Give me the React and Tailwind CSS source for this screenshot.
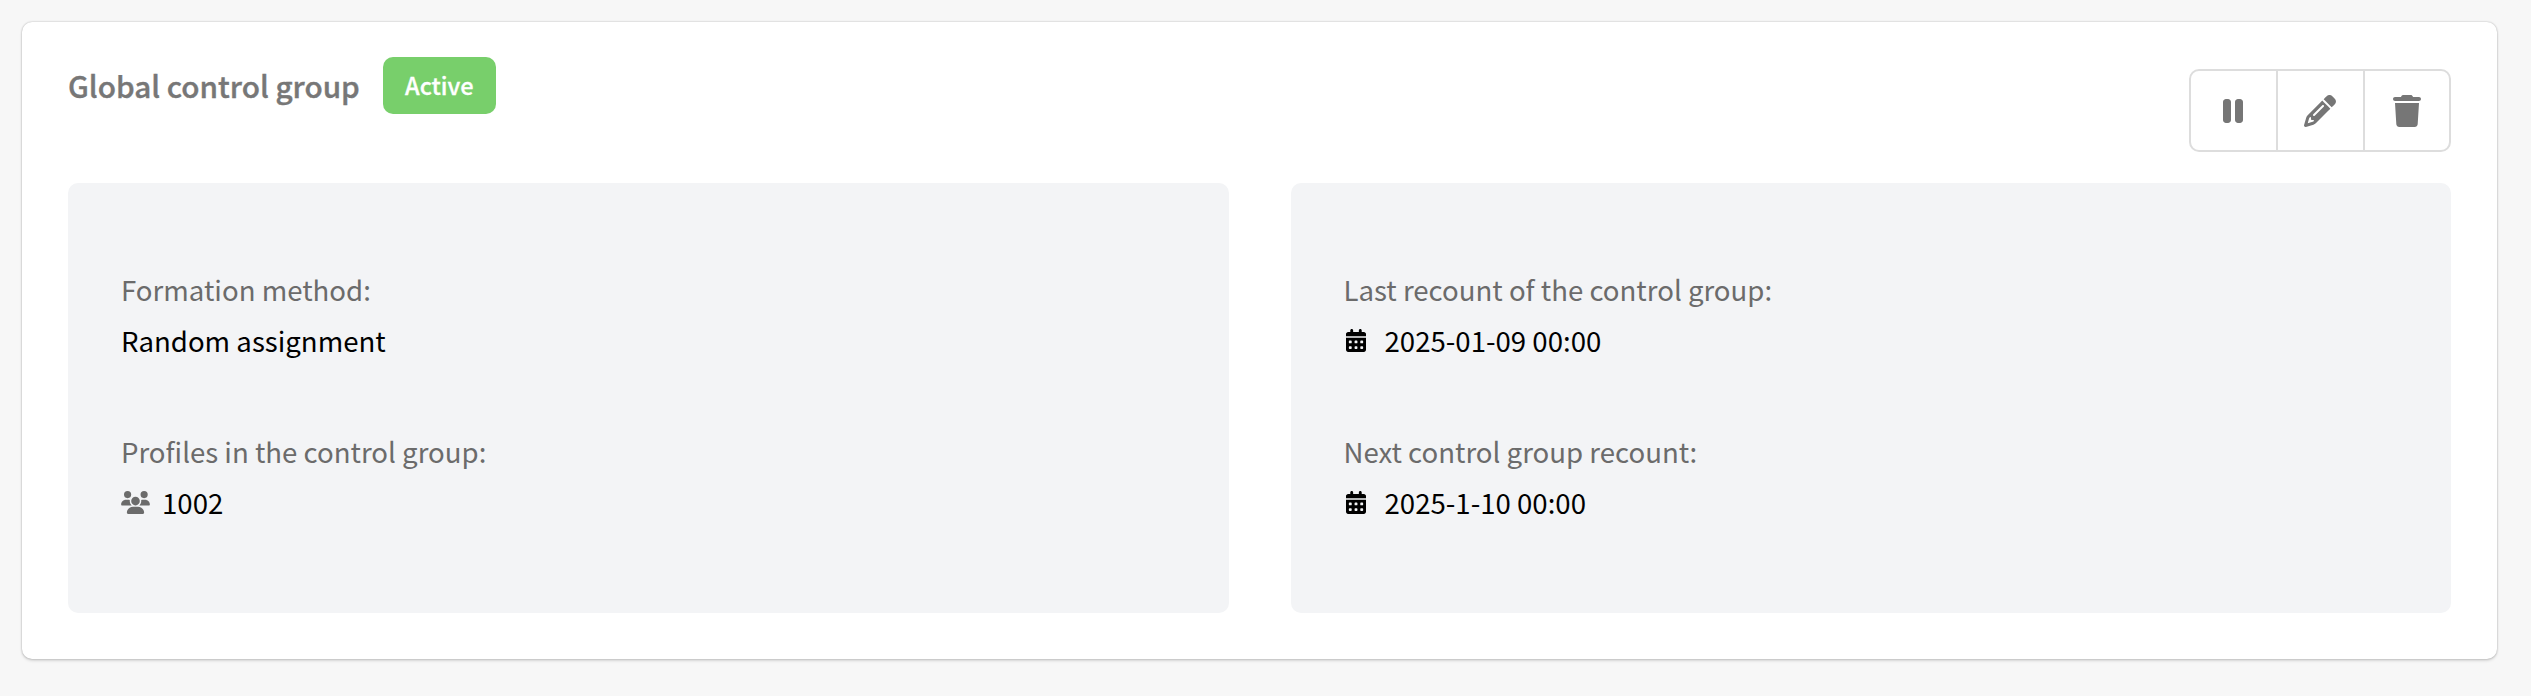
import { FaPause, FaPencil, FaUsers, FaCalendarDays } from "react-icons/fa6";

const Field = ({ label, icon, value, className = "" }) => (
  <div className={className}>
    <div className="text-[27.6px] leading-[40px] text-[#6b6b6b]">{label}</div>
    <div className="mt-[11px] flex items-center text-[27.6px] leading-[40px] text-black">
      {icon}
      {value}
    </div>
  </div>
);

const dateIcon = <FaCalendarDays className="ml-[2px] mr-[19px] h-[23px] w-[20px] text-black" />;

const TrashIcon = () => (
  <svg viewBox="0 0 448 512" fill="currentColor" className="h-[32px] w-[28px]">
    <path d="M135.2 17.7L128 32H32C14.3 32 0 46.3 0 64S14.3 96 32 96H416c17.7 0 32-14.3 32-32s-14.3-32-32-32H320l-7.2-14.3C307.4 6.8 296.3 0 284.2 0H163.8c-12.1 0-23.2 6.8-28.6 17.7zM416 128H32L53.2 467c1.6 25.3 22.6 45 47.9 45H346.9c25.3 0 46.3-19.7 47.9-45L416 128z" />
  </svg>
);

export default function App() {
  return (
    <div className="min-h-[696px] bg-[#f7f7f7] px-[22px] pt-[22px] font-['Noto_Sans_CJK_SC','Liberation_Sans',sans-serif]">
      <div className="h-[637px] w-[2475px] rounded-[10px] bg-white px-[46px] pt-[35px] shadow-[0_0_2px_rgba(0,0,0,0.3),0_2px_3px_rgba(0,0,0,0.12)]">
        <div className="flex h-[126px] items-start justify-between">
          <div className="flex items-center">
            <h2 className="text-[29.7px] font-medium leading-[55px] text-[#777777] [-webkit-text-stroke:0.4px_#777777]">Global control group</h2>
            <span className="ml-[23px] flex h-[57px] w-[113px] items-center justify-center rounded-[10px] bg-[#78cf6b] text-[23.5px] font-medium text-white [-webkit-text-stroke:0.3px_#ffffff]">
              Active
            </span>
          </div>
          <div className="mt-[12px] flex h-[83px] w-[262px] rounded-[10px] border-2 border-[#dddddd] text-[#767676]">
            <button className="flex w-[87px] items-center justify-center border-r-2 border-[#dddddd]">
              <FaPause className="mr-[2px] h-[32px] w-[20px]" />
            </button>
            <button className="flex w-[87px] items-center justify-center border-r-2 border-[#dddddd]">
              <FaPencil className="mr-[2px] h-[32px] w-[32px]" />
            </button>
            <button className="flex flex-1 items-center justify-center">
              <TrashIcon />
            </button>
          </div>
        </div>
        <div className="grid grid-cols-2 gap-[62px]">
          <div className="h-[430px] rounded-[10px] bg-[#f3f4f6] pl-[53px] pt-[86px]">
            <Field label="Formation method:" value="Random assignment" />
            <Field
              className="mt-[71px]"
              label="Profiles in the control group:"
              icon={<FaUsers className="mr-[12px] h-[23px] w-[29px] text-[#6b6b6b]" />}
              value="1002"
            />
          </div>
          <div className="h-[430px] rounded-[10px] bg-[#f3f4f6] pl-[53px] pt-[86px]">
            <Field label="Last recount of the control group:" icon={dateIcon} value="2025-01-09 00:00" />
            <Field className="mt-[71px]" label="Next control group recount:" icon={dateIcon} value="2025-1-10 00:00" />
          </div>
        </div>
      </div>
    </div>
  );
}
